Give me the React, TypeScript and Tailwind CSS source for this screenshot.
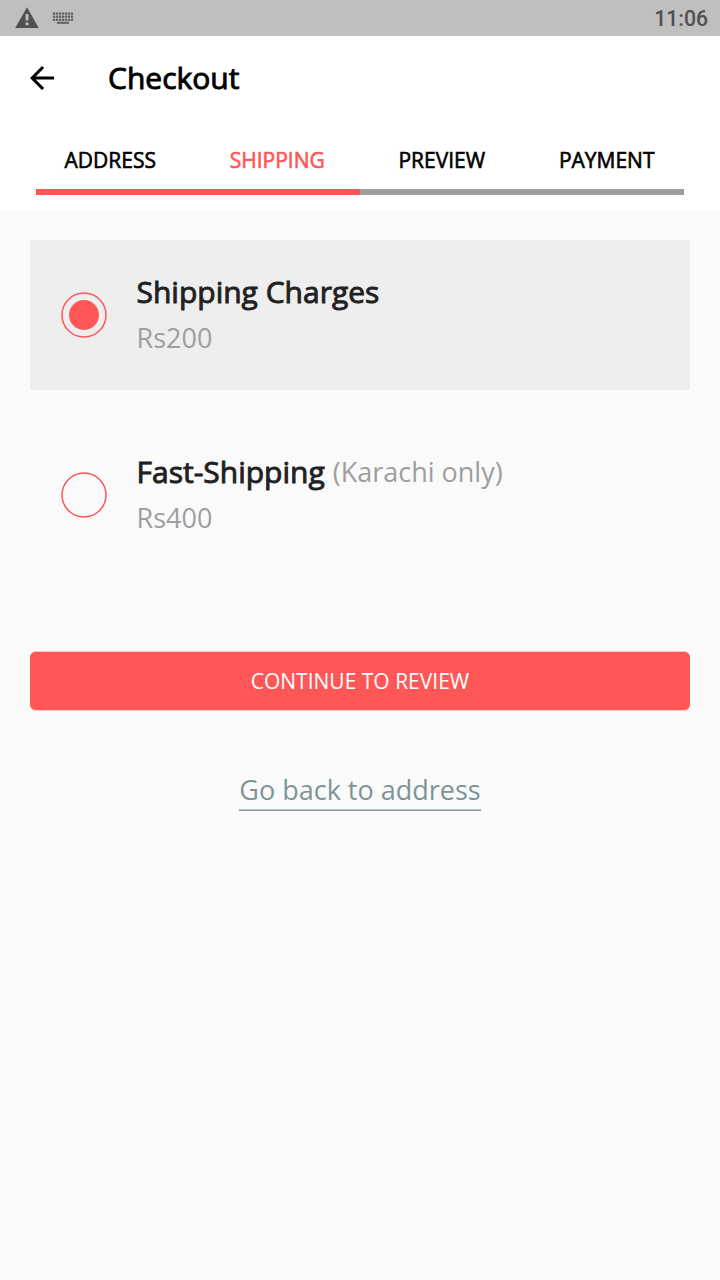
import React from "react";

const tabs = [
  { label: "ADDRESS", active: false },
  { label: "SHIPPING", active: true },
  { label: "PREVIEW", active: false },
  { label: "PAYMENT", active: false },
];

function StatusBar() {
  return (
    <div className="flex h-9 items-center bg-[#bfbfbf] pr-3 pl-[15px]">
      <svg className="h-9 w-6" viewBox="0 0 24 36" fill="#505050">
        <path d="M0.2 28 L12 7.2 L23.8 28 Z" />
        <path d="M10.6 14h2.8v6.6h-2.8zM10.6 22.4h2.8v2.8h-2.8z" fill="#bfbfbf" />
      </svg>
      <svg className="ml-[13px] h-9 w-6" viewBox="0 0 24 36" fill="#606060">
        {[12.5, 15.6, 18.7].map((y, row) =>
          [0, 1, 2, 3, 4, 5, 6].map((i) => (
            <rect key={`${row}-${i}`} x={0.8 + i * 3} y={y} width="2.3" height="2.2" />
          ))
        )}
        <rect x="5" y="21.8" width="12" height="2" />
      </svg>
      <span className="ml-auto pt-0.5 font-[Roboto,sans-serif] text-[21.2px] leading-9 font-medium text-[#505050]">
        11:06
      </span>
    </div>
  );
}

function Radio({ selected }: { selected: boolean }) {
  return (
    <svg className="size-12 shrink-0" viewBox="0 0 48 48">
      <circle cx="24" cy="24" r="22" fill="none" stroke="#ff5757" strokeWidth="1.5" />
      {selected && <circle cx="24" cy="24" r="15" fill="#ff5757" />}
    </svg>
  );
}

function Option({ title, note, price, selected }: { title: string; note?: string; price: string; selected: boolean }) {
  return (
    <div className={`flex h-[150px] items-center pl-[30px] ${selected ? "bg-[#eeeeee]" : ""}`}>
      <Radio selected={selected} />
      <div className="ml-[28.5px] flex flex-col pb-0.5">
        <div className="flex h-[46px] items-center gap-2 whitespace-nowrap">
          <span className="text-[30px] text-[#212121] [-webkit-text-stroke:0.9px_#212121]">{title}</span>
          {note && <span className="pt-0.5 text-[27px] text-[#9e9e9e]">{note}</span>}
        </div>
        <div className="flex h-[46px] items-center pt-0.5 text-[27px] text-[#9e9e9e]">{price}</div>
      </div>
    </div>
  );
}

export default function App() {
  return (
    <div className="flex h-[1280px] w-[720px] flex-col overflow-hidden bg-[#fafafa] font-['Open_Sans',sans-serif]">
      <StatusBar />
      <header className="h-[174px] bg-white">
        <div className="flex h-[84px] items-center pl-6">
          <svg className="size-9" viewBox="0 0 24 24">
            <path d="M20 11H7.83l5.59-5.59L12 4l-8 8 8 8 1.41-1.41L7.83 13H20v-2z" />
          </svg>
          <h1 className="ml-12 pb-0.5 text-[30px] text-black [-webkit-text-stroke:0.9px_#000]">Checkout</h1>
        </div>
        <nav className="flex h-[69px] items-center justify-between pt-[13px] pr-[65.5px] pl-[64.5px]">
          {tabs.map((t) => (
            <span
              key={t.label}
              className={`text-[21px] ${t.active ? "text-[#ff5757] [-webkit-text-stroke:0.6px_#ff5757]" : "text-black [-webkit-text-stroke:0.6px_#000]"}`}
            >
              {t.label}
            </span>
          ))}
        </nav>
        <div className="mx-9 flex h-1.5 bg-[#9e9e9e]">
          <div className="w-1/2 bg-[#ff5757]" />
        </div>
      </header>
      <main className="flex flex-col px-[30px] pt-[30px]">
        <Option title="Shipping Charges" price="Rs200" selected />
        <div className="h-[30px]" />
        <Option title="Fast-Shipping" note="(Karachi only)" price="Rs400" selected={false} />
        <button className="mt-[81px] flex h-[60px] items-center justify-center rounded-md border-y border-[#fdcaca] bg-[#ff5757] pt-0.5 text-[21px] text-white">
          CONTINUE TO REVIEW
        </button>
        <a className="mt-[58px] flex h-[42px] flex-col self-center text-[27px] leading-10 text-[#7d9499]">
          <span className="h-10 pt-px">Go back to address</span>
          <span className="h-px bg-[#b4c4c6]" />
          <span className="h-px bg-[#849da1]" />
        </a>
      </main>
    </div>
  );
}
